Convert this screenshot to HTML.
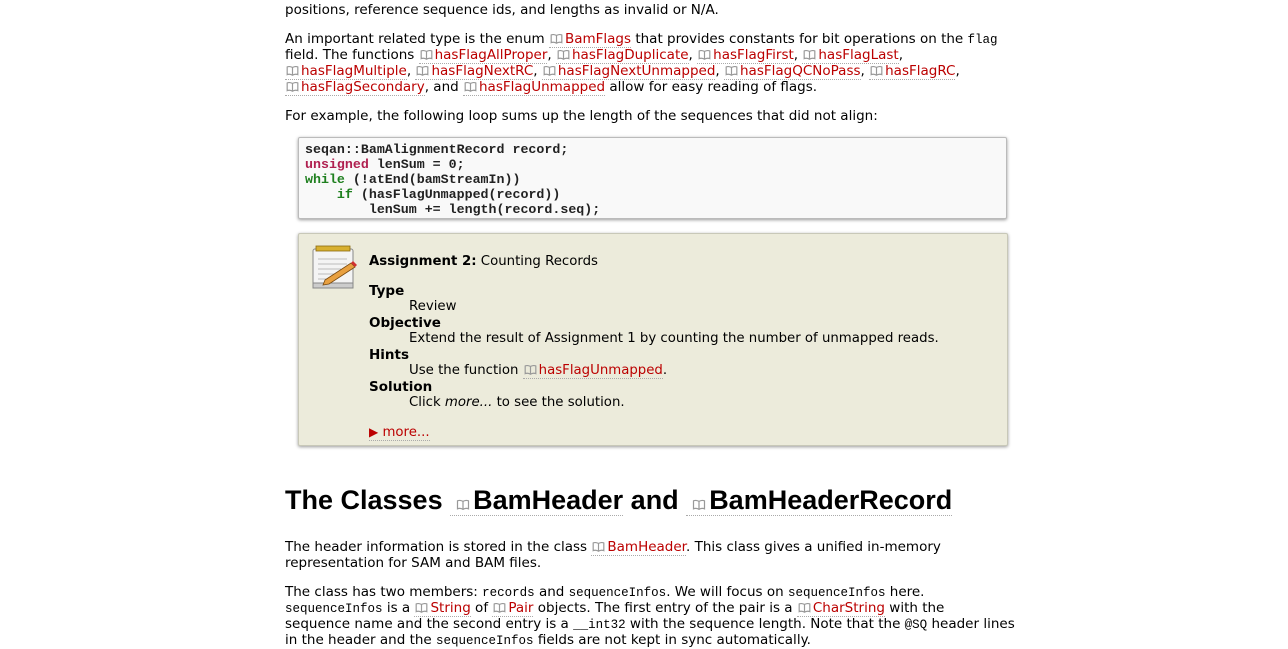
<!DOCTYPE html>
<html><head><meta charset="utf-8"><style>
body{margin:0;background:#fff;width:1288px;height:646px;overflow:hidden;position:relative;font-family:"DejaVu Sans","Liberation Sans",sans-serif;font-size:13.5px;color:#000}
.l{position:absolute;left:285px;white-space:nowrap;line-height:16px}
a{color:#b00;text-decoration:none;border-bottom:1px dotted #aaa}
.b{display:inline-block;width:13px;height:11px;margin:0 2px 0 1px;vertical-align:-1px}
.m{font-family:"Liberation Mono","DejaVu Sans Mono",monospace;font-size:12.5px}
.code{position:absolute;left:298px;top:137px;width:707px;height:80px;border:1px solid #bbb;background:#f9f9f9;box-shadow:0 1px 3px #999;border-radius:2px}
.code pre{margin:0;position:absolute;left:6px;top:4px;font-family:"Liberation Mono",monospace;font-size:13.3px;font-weight:bold;line-height:15px;color:#222}
.k1{color:#b02050}.k2{color:#208020}
.asg{position:absolute;left:298px;top:233px;width:708px;height:211px;background:#ecebdb;border:1px solid #c8c8b8;box-shadow:0 1px 3px #999;border-radius:2px}
.asg .t{position:absolute;left:70px;white-space:nowrap;line-height:16px;font-size:13.3px}
h1{position:absolute;left:285px;top:482px;margin:0;font-family:"Liberation Sans",sans-serif;font-size:27px;font-weight:bold;white-space:nowrap;line-height:36px}
h1 .b{width:14px;height:11px;margin:0 3px 0 6px}
</style></head><body>
<svg width="0" height="0" style="position:absolute"><defs><symbol id="bk" viewBox="0 0 11 9"><path d="M5.5 2C4 1 2 1 1 1.5V8C2 7.5 4 7.5 5.5 8.5C7 7.5 9 7.5 10 8V1.5C9 1 7 1 5.5 2ZM5.5 2V8.5" fill="none" stroke="#999" stroke-width="1"/></symbol></defs></svg>

<div class="l" style="top:2px">positions, reference sequence ids, and lengths as invalid or N/A.</div>
<div class="l" style="top:31px">An important related type is the enum <a><svg class="b"><use href="#bk"/></svg>BamFlags</a> that provides constants for bit operations on the <span class="m">flag</span></div>
<div class="l" style="top:47px">field. The functions <a><svg class="b"><use href="#bk"/></svg>hasFlagAllProper</a>, <a><svg class="b"><use href="#bk"/></svg>hasFlagDuplicate</a>, <a><svg class="b"><use href="#bk"/></svg>hasFlagFirst</a>, <a><svg class="b"><use href="#bk"/></svg>hasFlagLast</a>,</div>
<div class="l" style="top:63px"><a><svg class="b"><use href="#bk"/></svg>hasFlagMultiple</a>, <a><svg class="b"><use href="#bk"/></svg>hasFlagNextRC</a>, <a><svg class="b"><use href="#bk"/></svg>hasFlagNextUnmapped</a>, <a><svg class="b"><use href="#bk"/></svg>hasFlagQCNoPass</a>, <a><svg class="b"><use href="#bk"/></svg>hasFlagRC</a>,</div>
<div class="l" style="top:79px"><a><svg class="b"><use href="#bk"/></svg>hasFlagSecondary</a>, and <a><svg class="b"><use href="#bk"/></svg>hasFlagUnmapped</a> allow for easy reading of flags.</div>
<div class="l" style="top:108px">For example, the following loop sums up the length of the sequences that did not align:</div>

<div class="code"><pre>seqan::BamAlignmentRecord record;
<span class="k1">unsigned</span> lenSum = 0;
<span class="k2">while</span> (!atEnd(bamStreamIn))
    <span class="k2">if</span> (hasFlagUnmapped(record))
        lenSum += length(record.seq);</pre></div>

<div class="asg">
<svg style="position:absolute;left:12px;top:11px" width="46" height="46" viewBox="0 0 46 46">
<rect x="2" y="4" width="40" height="38" rx="2" fill="#f4f4f4" stroke="#888"/>
<rect x="2" y="38" width="40" height="5" fill="#ccc" stroke="#888"/>
<g stroke="#bbb"><line x1="7" y1="14" x2="36" y2="14"/><line x1="7" y1="19" x2="36" y2="19"/><line x1="7" y1="24" x2="30" y2="24"/><line x1="7" y1="29" x2="24" y2="29"/><line x1="7" y1="34" x2="20" y2="34"/></g>
<rect x="5" y="1" width="34" height="5" fill="#d8b030" stroke="#8a6a10" stroke-width=".8"/>
<path d="M14 35L40 18L44 22L18 39L12 40Z" fill="#e8a040" stroke="#7a4a10" stroke-width=".8"/>
<path d="M40 18L44 22L46 20L42 16Z" fill="#d03030"/>
</svg>
<div class="t" style="top:20px"><b>Assignment 2:</b> Counting Records</div>
<div class="t" style="top:49px;font-weight:bold;font-size:13.5px">Type</div>
<div class="t" style="top:65px;left:110px">Review</div>
<div class="t" style="top:81px;font-weight:bold;font-size:13.5px">Objective</div>
<div class="t" style="top:97px;left:110px">Extend the result of Assignment 1 by counting the number of unmapped reads.</div>
<div class="t" style="top:113px;font-weight:bold;font-size:13.5px">Hints</div>
<div class="t" style="top:129px;left:110px">Use the function <a><svg class="b"><use href="#bk"/></svg>hasFlagUnmapped</a>.</div>
<div class="t" style="top:145px;font-weight:bold;font-size:13.5px">Solution</div>
<div class="t" style="top:161px;left:110px">Click <i>more...</i> to see the solution.</div>
<div class="t" style="top:190px"><a><span style="font-size:12px">&#9654;</span> more...</a></div>
</div>

<h1>The Classes <a style="color:#000"><svg class="b"><use href="#bk"/></svg>BamHeader</a> and <a style="color:#000"><svg class="b"><use href="#bk"/></svg>BamHeaderRecord</a></h1>

<div class="l" style="top:539px">The header information is stored in the class <a><svg class="b"><use href="#bk"/></svg>BamHeader</a>. This class gives a unified in-memory</div>
<div class="l" style="top:555px">representation for SAM and BAM files.</div>
<div class="l" style="top:584px">The class has two members: <span class="m">records</span> and <span class="m">sequenceInfos</span>. We will focus on <span class="m">sequenceInfos</span> here.</div>
<div class="l" style="top:600px"><span class="m">sequenceInfos</span> is a <a><svg class="b"><use href="#bk"/></svg>String</a> of <a><svg class="b"><use href="#bk"/></svg>Pair</a> objects. The first entry of the pair is a <a><svg class="b"><use href="#bk"/></svg>CharString</a> with the</div>
<div class="l" style="top:616px">sequence name and the second entry is a <span class="m">__int32</span> with the sequence length. Note that the <span class="m">@SQ</span> header lines</div>
<div class="l" style="top:632px">in the header and the <span class="m">sequenceInfos</span> fields are not kept in sync automatically.</div>
</body></html>
